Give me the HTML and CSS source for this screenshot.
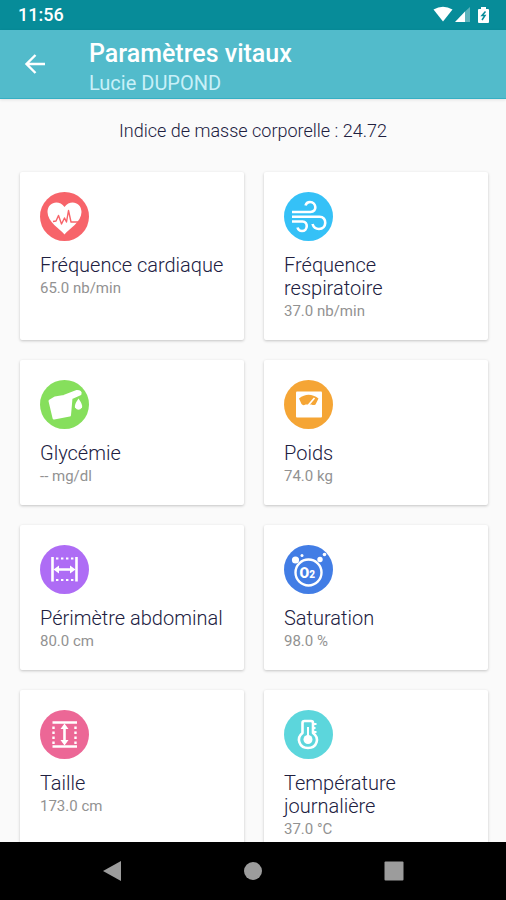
FILE: index.html
```html
<!DOCTYPE html>
<html lang="fr">
<head>
<meta charset="utf-8">
<meta name="viewport" content="width=device-width, initial-scale=1">
<title>Paramètres vitaux</title>
<link rel="stylesheet" href="styles.css">
</head>
<body>
<div class="status">
  <time class="clock">11:56</time>
  <svg class="status-icons" viewBox="0 0 58 18" aria-hidden="true">
    <path fill="#fff" d="M0.500 3.500Q10 -2 19.500 3.500L10 15.500Z"/>
    <path fill="#fff" d="M22 16L32 5.500V16Z"/>
    <path fill="#fff" opacity=".35" d="M32 5.500L37 1V16H32Z"/>
    <path fill="#fff" d="M48 1h5v2h2q1 0 1 1v12q0 1-1 1h-9q-1 0-1-1V4q0-1 1-1h2z"/>
    <path fill="none" stroke="#078c99" stroke-width="1.500" d="M52.500 5.500L49 9.500H52L49 14"/>
  </svg>
</div>
<header class="appbar">
  <button class="back" type="button" aria-label="Retour">
    <svg viewBox="0 0 22 22"><path fill="none" stroke="#fff" stroke-width="2.400" d="M21 11H3M11.500 2L2.500 11L11.500 20"/></svg>
  </button>
  <div class="titles">
    <h1 class="heading">Paramètres vitaux</h1>
    <p class="patient">Lucie DUPOND</p>
  </div>
</header>
<main class="content">
  <p class="bmi">Indice de masse corporelle : 24.72</p>
  <section class="grid">
    <article class="card">
      <svg class="icon" viewBox="0 0 49 49" aria-hidden="true">
        <circle cx="24.500" cy="24.500" r="24.500" fill="#f7646a"/>
        <path fill="#fff" d="M24.500 42.500C20 37 7.500 30 7.500 20C7.500 10 19 7 24.500 15C30 7 41.500 10 41.500 20C41.500 30 29 37 24.500 42.500Z"/>
        <path fill="none" stroke="#f7646a" stroke-width="1.400" stroke-linejoin="round" d="M13 29.500L16 29L18.500 23.500L21.500 32L24.500 26L26.500 30L28.500 18.500L31 30H38"/>
      </svg>
      <h2 class="name">Fréquence cardiaque</h2>
      <p class="value">65.0 nb/min</p>
    </article>
    <article class="card">
      <svg class="icon" viewBox="0 0 49 49" aria-hidden="true">
        <circle cx="24.500" cy="24.500" r="24.500" fill="#35c1f7"/>
        <path fill="none" stroke="#fff" stroke-width="2.600" d="M8 20H26.500C33.500 20 32.500 10 26 10Q22.500 10 21.500 13.500M8 24.700H35.500C43.500 24.700 43 37 35 37Q30 37 28.500 32M8 29.500H18.500C24.500 29.500 24 39 18 39Q14.500 39 13.500 35.500"/>
      </svg>
      <h2 class="name">Fréquence respiratoire</h2>
      <p class="value">37.0 nb/min</p>
    </article>
    <article class="card">
      <svg class="icon" viewBox="0 0 49 49" aria-hidden="true">
        <circle cx="24.500" cy="24.500" r="24.500" fill="#86df5c"/>
        <path fill="#fff" stroke="#fff" stroke-width="3" stroke-linejoin="round" d="M10 21L15 18L24 16.500L37 11.500Q41 11.500 40 14L31 18L29.500 35L14 38Z"/>
        <path fill="#fff" d="M38.500 18.500Q43 25 42 27.500Q38.500 32 35 27.500Q34 25 38.500 18.500Z"/>
      </svg>
      <h2 class="name">Glycémie</h2>
      <p class="value">-- mg/dl</p>
    </article>
    <article class="card">
      <svg class="icon" viewBox="0 0 49 49" aria-hidden="true">
        <circle cx="24.500" cy="24.500" r="24.500" fill="#f5a535"/>
        <rect x="12" y="11.500" width="26" height="26" rx="1" fill="#fff"/>
        <path fill="#f5a535" d="M15 18.500Q24.500 11 34.500 18.500L31.500 24.500Q29.500 25.500 27.500 24.500H21.500Q19 26 17.500 24Z"/>
        <path fill="none" stroke="#fff" stroke-width="1.700" d="M24.500 25L30.500 18"/>
      </svg>
      <h2 class="name">Poids</h2>
      <p class="value">74.0 kg</p>
    </article>
    <article class="card">
      <svg class="icon" viewBox="0 0 49 49" aria-hidden="true">
        <circle cx="24.500" cy="24.500" r="24.500" fill="#ae6cf5"/>
        <path fill="none" stroke="#fff" stroke-width="2.600" d="M12.500 12V36.500M36.500 12V36.500M17 24.500H32"/>
        <path fill="none" stroke="#fff" stroke-width="2" stroke-dasharray="2.400 2.600" d="M16 13.500H35M16 35H35"/>
        <path fill="#fff" d="M13.500 24.500L19 20.500V28.500ZM35.500 24.500L30 20.500V28.500Z"/>
      </svg>
      <h2 class="name">Périmètre abdominal</h2>
      <p class="value">80.0 cm</p>
    </article>
    <article class="card">
      <svg class="icon" viewBox="0 0 49 49" aria-hidden="true">
        <circle cx="24.500" cy="24.500" r="24.500" fill="#427de5"/>
        <circle cx="24.500" cy="27.500" r="13" fill="none" stroke="#fff" stroke-width="2.400"/>
        <circle cx="11.500" cy="15" r="3.600" fill="#fff"/>
        <circle cx="18" cy="10.500" r="1.500" fill="#fff"/>
        <circle cx="36" cy="14.500" r="2.700" fill="#fff"/>
        <circle cx="40.500" cy="9.500" r="1.800" fill="#fff"/>
        <text class="oxygen" x="15.500" y="32.500">O<tspan class="oxygen-sub">2</tspan></text>
      </svg>
      <h2 class="name">Saturation</h2>
      <p class="value">98.0 %</p>
    </article>
    <article class="card">
      <svg class="icon" viewBox="0 0 49 49" aria-hidden="true">
        <circle cx="24.500" cy="24.500" r="24.500" fill="#ec6796"/>
        <path fill="none" stroke="#fff" stroke-width="2.600" d="M12.500 12.500H37M12.500 36.500H37M24.500 17V32"/>
        <path fill="none" stroke="#fff" stroke-width="2.400" stroke-dasharray="2.400 2.600" d="M13.500 16.500V34M35.500 16.500V34"/>
        <path fill="#fff" d="M24.500 13.500L28.500 19H20.500ZM24.500 35.500L28.500 30H20.500Z"/>
      </svg>
      <h2 class="name">Taille</h2>
      <p class="value">173.0 cm</p>
    </article>
    <article class="card">
      <svg class="icon" viewBox="0 0 49 49" aria-hidden="true">
        <circle cx="24.500" cy="24.500" r="24.500" fill="#5cd6dc"/>
        <path fill="none" stroke="#fff" stroke-width="2.600" stroke-linejoin="round" d="M18.500 23V13Q18.500 11 20.500 11H27Q29 11 29 13V23C36 28 33 38 24 38C15 38 12 28 18.500 23Z"/>
        <circle cx="24" cy="29.500" r="4.500" fill="#fff"/>
        <path fill="none" stroke="#fff" stroke-width="2" d="M24 30V17M29 14H32.500M29 18H31.500M29 22H32.500"/>
      </svg>
      <h2 class="name">Température journalière</h2>
      <p class="value">37.0 °C</p>
    </article>
  </section>
</main>
<nav class="navbar" aria-label="Système">
  <button class="key" type="button" aria-label="Précédent"><svg viewBox="0 0 20 20"><path d="M1 10L19 0V20Z"/></svg></button>
  <button class="key" type="button" aria-label="Accueil"><svg viewBox="0 0 20 20"><circle cx="10" cy="10" r="9"/></svg></button>
  <button class="key" type="button" aria-label="Applications récentes"><svg viewBox="0 0 20 20"><rect x="0.500" y="0.500" width="19" height="19" rx="1"/></svg></button>
</nav>
</body>
</html>
```
FILE: styles.css
```css
* {
  box-sizing: border-box;
}

body {
  display: flex;
  flex-direction: column;
  height: 100vh;
  margin: 0;
  background: #fafafa;
  color: #20203f;
  font-family: Roboto, "Liberation Sans", sans-serif;
}

h1,
h2,
p {
  margin: 0;
}

button {
  display: flex;
  align-items: center;
  justify-content: center;
  padding: 0;
  border: 0;
  background: none;
}

.status {
  display: flex;
  flex: none;
  align-items: center;
  justify-content: space-between;
  height: 30px;
  padding: 0 15px 0 18px;
  background: #078c99;
}

.clock {
  color: #fff;
  font-size: 18px;
  font-weight: 500;
  line-height: 32px;
}

.status-icons {
  width: 58px;
  height: 18px;
}

.appbar {
  display: flex;
  flex: none;
  align-items: center;
  gap: 32px;
  height: 69px;
  padding: 0 12px;
  border-bottom: 1px solid #35afc4;
  background: #52bbcb;
  color: #fff;
  box-shadow: 0 1px 3px #0000001a;
}

.back {
  width: 45px;
  height: 45px;
}

.back svg {
  width: 22px;
  height: 22px;
}

.titles {
  padding-top: 7px;
}

.heading {
  font-size: 25px;
  font-weight: 500;
  line-height: 30px;
}

.patient {
  color: #c9f0f8;
  font-size: 20px;
  line-height: 28px;
}

.content {
  flex: 1;
  min-height: 0;
  overflow-y: auto;
  scrollbar-width: none;
}

.bmi {
  padding: 20px 0;
  font-size: 18px;
  font-weight: 300;
  line-height: 24px;
  text-align: center;
}

.grid {
  display: grid;
  grid-template-columns: 1fr 1fr;
  gap: 20px;
  padding: 9px 18px 20px 20px;
}

.card {
  padding: 20px 16px 19px 20px;
  border-radius: 2px;
  background: #fff;
  box-shadow: 0 1px 3px #00000038;
}

.icon {
  display: block;
  width: 49px;
  height: 49px;
  margin-bottom: 13px;
}

.oxygen {
  fill: #fff;
  font-size: 14px;
  font-weight: 900;
}

.oxygen-sub {
  font-size: 10px;
}

.name {
  font-size: 20px;
  font-weight: 300;
  line-height: 23px;
}

.value {
  padding-top: 2px;
  color: #929292;
  font-size: 15px;
  line-height: 19px;
}

.navbar {
  display: flex;
  flex: none;
  align-items: center;
  justify-content: space-around;
  height: 58px;
  padding: 0 42px;
  background: #000;
}

.key {
  width: 40px;
  height: 40px;
}

.key svg {
  width: 20px;
  height: 20px;
  fill: #9c9c9c;
}
```
